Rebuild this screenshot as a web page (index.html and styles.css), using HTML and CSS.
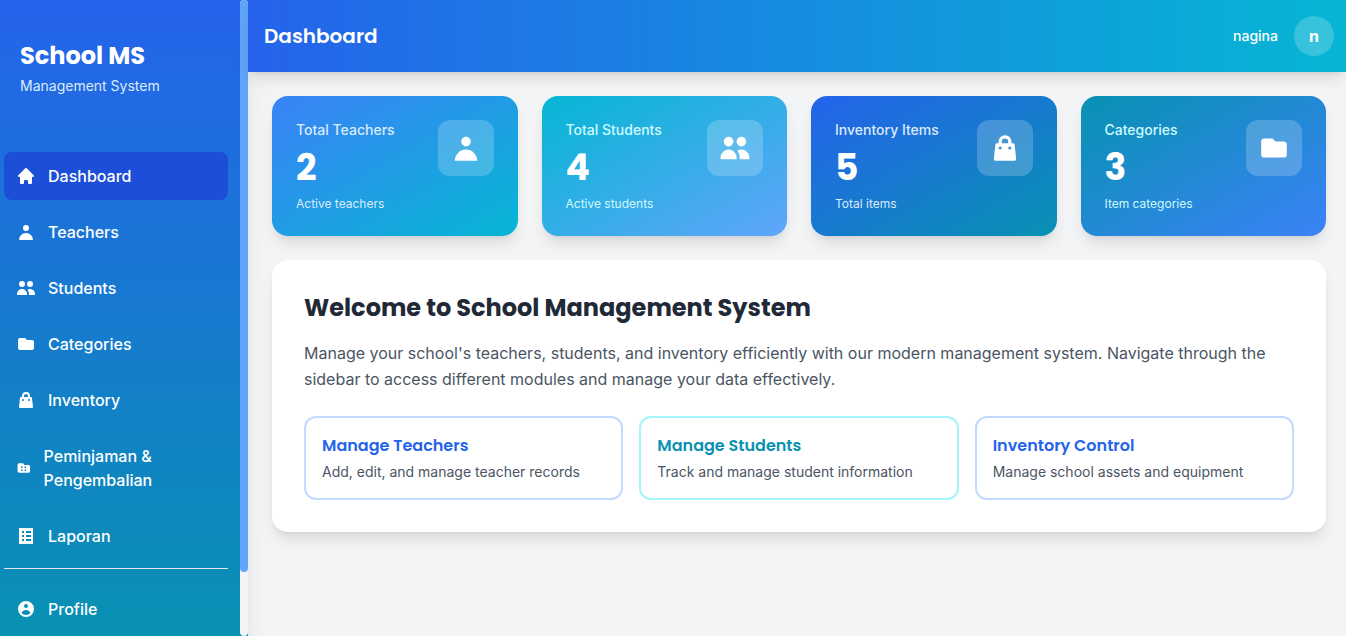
FILE: index.html
```html
<!DOCTYPE html>
<html lang="id">
<head>
    <meta charset="UTF-8">
    <meta name="viewport" content="width=device-width, initial-scale=1.0">
    <title>Dashboard - School MS</title>
    <link rel="stylesheet" href="styles.css">
</head>
<body>
    <!-- Icon sprite -->
    <svg class="sprite" aria-hidden="true">
        <symbol id="icon-home" viewBox="0 0 20 20">
            <path d="M10.707 2.293a1 1 0 00-1.414 0l-7 7a1 1 0 001.414 1.414L4 10.414V17a1 1 0 001 1h2a1 1 0 001-1v-2a1 1 0 011-1h2a1 1 0 011 1v2a1 1 0 001 1h2a1 1 0 001-1v-6.586l.293.293a1 1 0 001.414-1.414l-7-7z"/>
        </symbol>
        <symbol id="icon-user" viewBox="0 0 20 20">
            <path fill-rule="evenodd" d="M10 9a3 3 0 100-6 3 3 0 000 6zm-7 9a7 7 0 1114 0H3z"/>
        </symbol>
        <symbol id="icon-users" viewBox="0 0 20 20">
            <path d="M9 6a3 3 0 11-6 0 3 3 0 016 0zM17 6a3 3 0 11-6 0 3 3 0 016 0zM12.93 17c.046-.327.07-.66.07-1a6.97 6.97 0 00-1.5-4.33A5 5 0 0119 16v1h-6.07zM6 11a5 5 0 015 5v1H1v-1a5 5 0 015-5z"/>
        </symbol>
        <symbol id="icon-folder" viewBox="0 0 20 20">
            <path d="M2 6a2 2 0 012-2h5l2 2h5a2 2 0 012 2v6a2 2 0 01-2 2H4a2 2 0 01-2-2V6z"/>
        </symbol>
        <symbol id="icon-bag" viewBox="0 0 20 20">
            <path fill-rule="evenodd" d="M10 2a4 4 0 00-4 4v1H5a1 1 0 00-.994.89l-1 9A1 1 0 004 18h12a1 1 0 00.994-1.11l-1-9A1 1 0 0015 7h-1V6a4 4 0 00-4-4zm2 5V6a2 2 0 10-4 0v1h4zm-6 3a1 1 0 112 0 1 1 0 01-2 0zm7-1a1 1 0 100 2 1 1 0 000-2z"/>
        </symbol>
        <symbol id="icon-loan" viewBox="0 0 20 20">
            <path fill-rule="evenodd" d="M2 6a2 2 0 012-2h5l2 2h5a2 2 0 012 2v6a2 2 0 01-2 2H4a2 2 0 01-2-2V6zm4.500 2v2h2V8h-2zm4.500 0v2h2V8h-2zm-4.500 4v2h2v-2h-2zm4.500 0v2h2v-2h-2z"/>
        </symbol>
        <symbol id="icon-report" viewBox="0 0 20 20">
            <path fill-rule="evenodd" d="M3 2h14v16H3V2zm3 3v2h2V5H6zm4 0v2h5V5h-5zM6 9v2h2V9H6zm4 0v2h5V9h-5zm-4 4v2h2v-2H6zm4 0v2h5v-2h-5z"/>
        </symbol>
        <symbol id="icon-profile" viewBox="0 0 20 20">
            <path fill-rule="evenodd" d="M18 10a8 8 0 11-16 0 8 8 0 0116 0zm-6-3a2 2 0 11-4 0 2 2 0 014 0zm-2 4a5 5 0 00-4.546 2.916A5.986 5.986 0 0010 16a5.986 5.986 0 004.546-2.084A5 5 0 0010 11z"/>
        </symbol>
    </svg>

    <div class="layout">
        <aside class="sidebar">
            <div class="sidebar-content">
                <div class="brand">
                    <div class="brand-name">School MS</div>
                    <p class="brand-sub">Management System</p>
                </div>
                <nav class="nav">
                    <a href="#" class="nav-link active"><svg class="icon"><use href="#icon-home"/></svg><span>Dashboard</span></a>
                    <a href="#" class="nav-link"><svg class="icon"><use href="#icon-user"/></svg><span>Teachers</span></a>
                    <a href="#" class="nav-link"><svg class="icon"><use href="#icon-users"/></svg><span>Students</span></a>
                    <a href="#" class="nav-link"><svg class="icon"><use href="#icon-folder"/></svg><span>Categories</span></a>
                    <a href="#" class="nav-link"><svg class="icon"><use href="#icon-bag"/></svg><span>Inventory</span></a>
                    <a href="#" class="nav-link"><svg class="icon"><use href="#icon-loan"/></svg><span>Peminjaman &amp; Pengembalian</span></a>
                    <a href="#" class="nav-link"><svg class="icon"><use href="#icon-report"/></svg><span>Laporan</span></a>
                    <div class="nav-account">
                        <a href="#" class="nav-link"><svg class="icon"><use href="#icon-profile"/></svg><span>Profile</span></a>
                    </div>
                </nav>
            </div>
            <div class="scroll-track" aria-hidden="true">
                <div class="scroll-thumb"></div>
            </div>
        </aside>

        <div class="page">
            <header class="topbar">
                <h1 class="topbar-title">Dashboard</h1>
                <div class="user">
                    <span class="user-name">nagina</span>
                    <span class="avatar">n</span>
                </div>
            </header>

            <main class="main">
                <section class="stats">
                    <div class="stat stat-teachers">
                        <div>
                            <p class="stat-label">Total Teachers</p>
                            <p class="stat-value">2</p>
                            <p class="stat-note">Active teachers</p>
                        </div>
                        <div class="stat-icon"><svg class="icon-lg"><use href="#icon-user"/></svg></div>
                    </div>
                    <div class="stat stat-students">
                        <div>
                            <p class="stat-label">Total Students</p>
                            <p class="stat-value">4</p>
                            <p class="stat-note">Active students</p>
                        </div>
                        <div class="stat-icon"><svg class="icon-lg"><use href="#icon-users"/></svg></div>
                    </div>
                    <div class="stat stat-items">
                        <div>
                            <p class="stat-label">Inventory Items</p>
                            <p class="stat-value">5</p>
                            <p class="stat-note">Total items</p>
                        </div>
                        <div class="stat-icon"><svg class="icon-lg"><use href="#icon-bag"/></svg></div>
                    </div>
                    <div class="stat stat-categories">
                        <div>
                            <p class="stat-label">Categories</p>
                            <p class="stat-value">3</p>
                            <p class="stat-note">Item categories</p>
                        </div>
                        <div class="stat-icon"><svg class="icon-lg"><use href="#icon-folder"/></svg></div>
                    </div>
                </section>

                <section class="welcome">
                    <h2 class="welcome-title">Welcome to School Management System</h2>
                    <p class="welcome-text">Manage your school's teachers, students, and inventory efficiently with our modern management system. Navigate through the sidebar to access different modules and manage your data effectively.</p>
                    <div class="features">
                        <div class="feature">
                            <h3>Manage Teachers</h3>
                            <p>Add, edit, and manage teacher records</p>
                        </div>
                        <div class="feature feature-cyan">
                            <h3>Manage Students</h3>
                            <p>Track and manage student information</p>
                        </div>
                        <div class="feature">
                            <h3>Inventory Control</h3>
                            <p>Manage school assets and equipment</p>
                        </div>
                    </div>
                </section>
            </main>
        </div>
    </div>
</body>
</html>
```
FILE: styles.css
```css
* {
    margin: 0;
    padding: 0;
    box-sizing: border-box;
}

body {
    font-family: Inter, 'Liberation Sans', sans-serif;
    font-size: 16px;
    line-height: 24px;
    color: #1f2937;
    background: #f3f4f6;
}

.sprite {
    display: none;
}

.layout {
    display: flex;
    height: 100vh;
}

/* Sidebar */
.sidebar {
    display: flex;
    width: 248px;
    flex-shrink: 0;
    background: linear-gradient(to bottom, #2563eb, #0891b2);
    box-shadow: 0 20px 25px -5px rgba(0, 0, 0, 0.1), 0 8px 10px -6px rgba(0, 0, 0, 0.1);
    color: white;
}

.sidebar-content {
    flex: 1;
    min-width: 0;
    overflow-y: auto;
    scrollbar-width: none;
}

.scroll-track {
    width: 8px;
    border-radius: 4px;
    background: #f3f4f6;
}

.scroll-thumb {
    height: 90%;
    border-radius: 4px;
    background: #60a5fa;
}

.brand {
    padding: 40px 20px 32px;
}

.brand-name {
    font-family: Poppins, Inter, sans-serif;
    font-size: 24px;
    font-weight: 700;
    line-height: 32px;
}

.brand-sub {
    margin-top: 4px;
    font-size: 14px;
    line-height: 20px;
    color: #dbeafe;
}

.nav {
    display: flex;
    flex-direction: column;
    gap: 8px;
    padding: 24px 12px 0 4px;
}

.nav-link {
    display: flex;
    align-items: center;
    gap: 12px;
    padding: 12px;
    border-radius: 8px;
    color: white;
    font-weight: 500;
    text-decoration: none;
}

.nav-link:hover,
.nav-link.active {
    background: #1d4ed8;
}

.nav-account {
    padding-top: 16px;
    border-top: 1px solid #e5e7eb;
}

.icon {
    width: 20px;
    height: 20px;
    fill: currentColor;
}

.icon-lg {
    width: 32px;
    height: 32px;
    fill: currentColor;
}

/* Top bar */
.page {
    flex: 1;
    min-width: 0;
}

.topbar {
    display: flex;
    align-items: center;
    justify-content: space-between;
    padding: 16px 12px 16px 16px;
    background: linear-gradient(to right, #2563eb, #06b6d4);
    box-shadow: 0 10px 15px -3px rgba(0, 0, 0, 0.1), 0 4px 6px -4px rgba(0, 0, 0, 0.1);
    color: white;
}

.topbar-title {
    font-family: Poppins, Inter, sans-serif;
    font-size: 20px;
    font-weight: 600;
    line-height: 28px;
}

.user {
    display: flex;
    align-items: center;
    gap: 16px;
}

.user-name {
    font-size: 14px;
    font-weight: 500;
}

.avatar {
    display: flex;
    align-items: center;
    justify-content: center;
    width: 40px;
    height: 40px;
    border-radius: 50%;
    background: rgba(255, 255, 255, 0.2);
    font-weight: 700;
}

/* Content */
.main {
    display: flex;
    flex-direction: column;
    gap: 24px;
    padding: 24px 20px 24px 24px;
}

.stats {
    display: grid;
    grid-template-columns: repeat(4, 1fr);
    gap: 24px;
}

.stat {
    display: flex;
    align-items: flex-start;
    justify-content: space-between;
    padding: 24px;
    border-radius: 16px;
    box-shadow: 0 10px 15px -3px rgba(0, 0, 0, 0.1), 0 4px 6px -4px rgba(0, 0, 0, 0.1);
    color: #dbeafe;
}

.stat-teachers {
    background: linear-gradient(to bottom right, #3b82f6, #06b6d4);
}

.stat-students {
    background: linear-gradient(to bottom right, #06b6d4, #60a5fa);
    color: #cffafe;
}

.stat-items {
    background: linear-gradient(to bottom right, #2563eb, #0891b2);
}

.stat-categories {
    background: linear-gradient(to bottom right, #0891b2, #3b82f6);
    color: #cffafe;
}

.stat-label {
    font-size: 14px;
    font-weight: 500;
    line-height: 20px;
}

.stat-value {
    margin: 8px 0;
    font-family: Poppins, Inter, sans-serif;
    color: white;
    font-size: 36px;
    font-weight: 700;
    line-height: 40px;
}

.stat-note {
    font-size: 12px;
    line-height: 16px;
}

.stat-icon {
    display: flex;
    align-items: center;
    justify-content: center;
    width: 56px;
    height: 56px;
    border-radius: 12px;
    background: rgba(255, 255, 255, 0.2);
    color: white;
}

.welcome {
    padding: 32px;
    border-radius: 16px;
    background: white;
    box-shadow: 0 10px 15px -3px rgba(0, 0, 0, 0.1), 0 4px 6px -4px rgba(0, 0, 0, 0.1);
}

.welcome-title {
    margin-bottom: 16px;
    font-family: Poppins, Inter, sans-serif;
    font-size: 24px;
    font-weight: 700;
    line-height: 32px;
}

.welcome-text {
    margin-bottom: 24px;
    line-height: 26px;
    color: #4b5563;
}

.features {
    display: grid;
    grid-template-columns: repeat(3, 1fr);
    gap: 16px;
}

.feature {
    padding: 16px;
    border: 2px solid #bfdbfe;
    border-radius: 12px;
}

.feature h3 {
    margin-bottom: 4px;
    font-family: Poppins, Inter, sans-serif;
    font-size: 16px;
    font-weight: 600;
    line-height: 24px;
    color: #2563eb;
}

.feature p {
    font-size: 14px;
    line-height: 20px;
    color: #4b5563;
}

.feature-cyan {
    border-color: #a5f3fc;
}

.feature-cyan h3 {
    color: #0891b2;
}

@media (max-width: 900px) {
    .stats {
        grid-template-columns: repeat(2, 1fr);
    }

    .features {
        grid-template-columns: 1fr;
    }
}
```
